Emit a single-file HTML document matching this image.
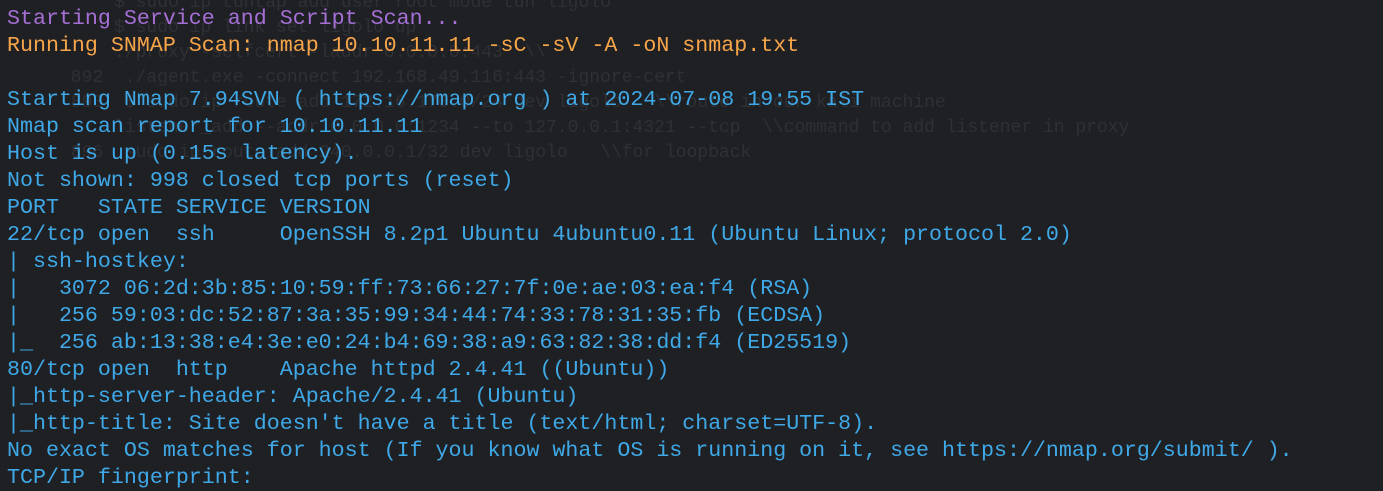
<!DOCTYPE html>
<html><head><meta charset="utf-8"><style>
html,body{margin:0;padding:0;background:#1f2024;width:1383px;height:475px;overflow:hidden}
pre{margin:0;position:absolute;left:7px;top:5px;font-family:"Liberation Mono","DejaVu Sans Mono",monospace;font-size:21.65px;line-height:27px;color:#3fa9e8;white-space:pre}
.p{color:#a66fd6}.o{color:#f7a54a}
.bg{position:absolute;left:60px;top:-9px;font-family:"Liberation Mono",monospace;font-size:18px;line-height:25px;color:#2f3034;white-space:pre}
</style></head><body>
<pre class="bg">     $ sudo ip tuntap add user root mode tun ligolo
     $ sudo ip link set ligolo up
     ./proxy -selfcert -laddr 0.0.0.0:443  \\
 892  ./agent.exe -connect 192.168.49.116:443 -ignore-cert
 893  $ sudo ip route add 172.16.170.0/24 dev ligolo   \\route in our kali machine
     listener_add --addr 0.0.0.0:1234 --to 127.0.0.1:4321 --tcp  \\command to add listener in proxy
 896  sudo ip route add 240.0.0.1/32 dev ligolo   \\for loopback</pre>
<pre><span class="p">Starting Service and Script Scan...</span>
<span class="o">Running SNMAP Scan: nmap 10.10.11.11 -sC -sV -A -oN snmap.txt</span>

Starting Nmap 7.94SVN ( https://nmap.org ) at 2024-07-08 19:55 IST
Nmap scan report for 10.10.11.11
Host is up (0.15s latency).
Not shown: 998 closed tcp ports (reset)
PORT   STATE SERVICE VERSION
22/tcp open  ssh     OpenSSH 8.2p1 Ubuntu 4ubuntu0.11 (Ubuntu Linux; protocol 2.0)
| ssh-hostkey:
|   3072 06:2d:3b:85:10:59:ff:73:66:27:7f:0e:ae:03:ea:f4 (RSA)
|   256 59:03:dc:52:87:3a:35:99:34:44:74:33:78:31:35:fb (ECDSA)
|_  256 ab:13:38:e4:3e:e0:24:b4:69:38:a9:63:82:38:dd:f4 (ED25519)
80/tcp open  http    Apache httpd 2.4.41 ((Ubuntu))
|_http-server-header: Apache/2.4.41 (Ubuntu)
|_http-title: Site doesn't have a title (text/html; charset=UTF-8).
No exact OS matches for host (If you know what OS is running on it, see https://nmap.org/submit/ ).
TCP/IP fingerprint:</pre>
</body></html>
